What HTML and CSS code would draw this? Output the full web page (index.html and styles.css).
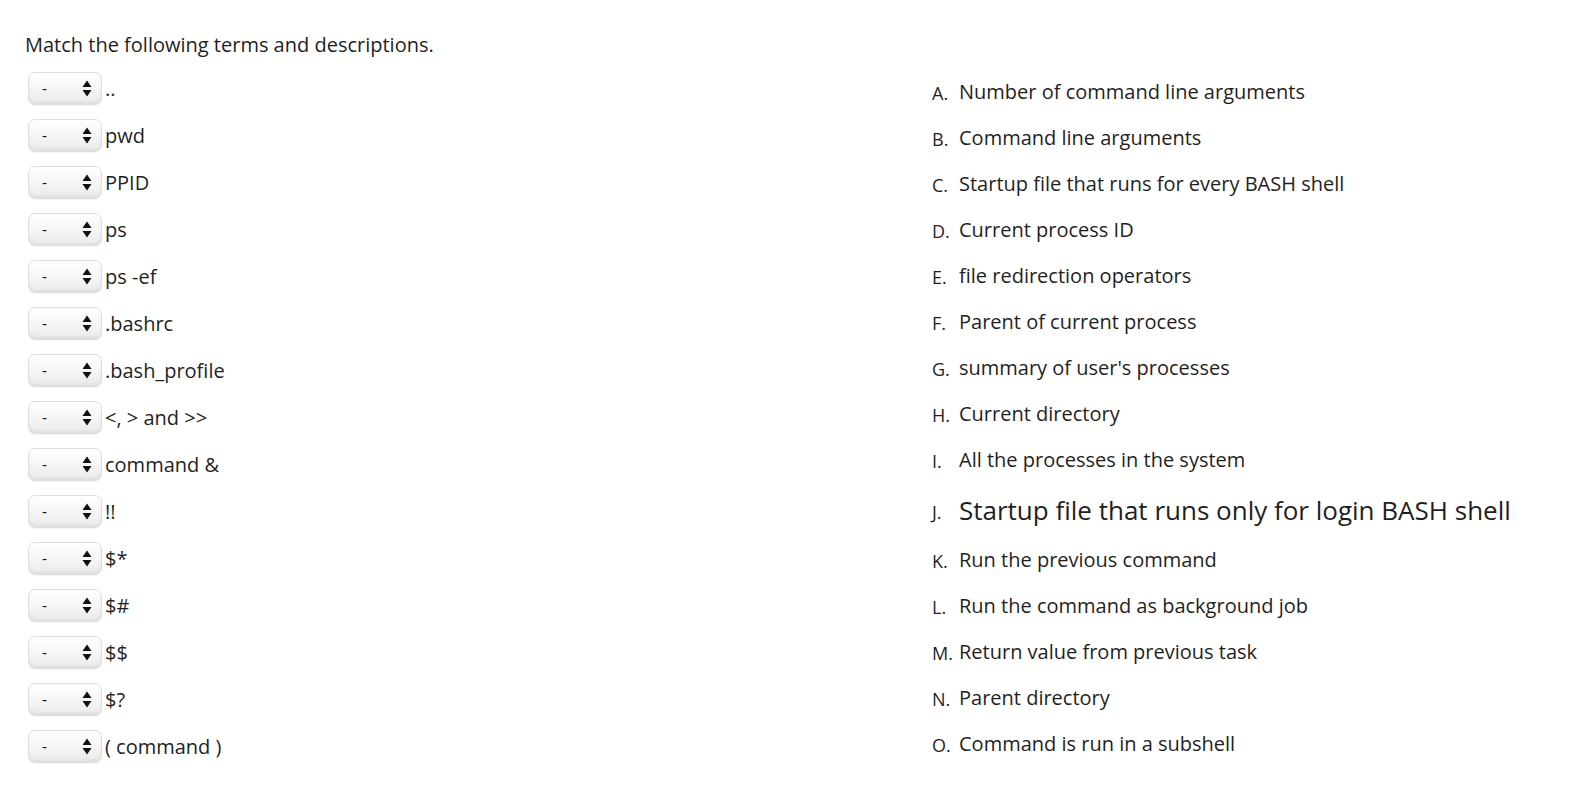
FILE: index.html
```html
<!DOCTYPE html>
<html>
<head>
<meta charset="utf-8">
<link rel="stylesheet" href="styles.css">
</head>
<body>
<div class="page">
  <p class="title">Match the following terms and descriptions.</p>
  <div class="columns">
    <div class="terms">
      <div class="term"><span class="sel"><span class="dash">-</span><svg class="arr" width="10" height="17" viewBox="0 0 10 17"><path d="M5 0.5 L9.5 7 H0.5 Z M5 16.5 L9.5 10 H0.5 Z" fill="#111"/></svg></span><span class="tt">..</span></div>
      <div class="term"><span class="sel"><span class="dash">-</span><svg class="arr" width="10" height="17" viewBox="0 0 10 17"><path d="M5 0.5 L9.5 7 H0.5 Z M5 16.5 L9.5 10 H0.5 Z" fill="#111"/></svg></span><span class="tt">pwd</span></div>
      <div class="term"><span class="sel"><span class="dash">-</span><svg class="arr" width="10" height="17" viewBox="0 0 10 17"><path d="M5 0.5 L9.5 7 H0.5 Z M5 16.5 L9.5 10 H0.5 Z" fill="#111"/></svg></span><span class="tt">PPID</span></div>
      <div class="term"><span class="sel"><span class="dash">-</span><svg class="arr" width="10" height="17" viewBox="0 0 10 17"><path d="M5 0.5 L9.5 7 H0.5 Z M5 16.5 L9.5 10 H0.5 Z" fill="#111"/></svg></span><span class="tt">ps</span></div>
      <div class="term"><span class="sel"><span class="dash">-</span><svg class="arr" width="10" height="17" viewBox="0 0 10 17"><path d="M5 0.5 L9.5 7 H0.5 Z M5 16.5 L9.5 10 H0.5 Z" fill="#111"/></svg></span><span class="tt">ps -ef</span></div>
      <div class="term"><span class="sel"><span class="dash">-</span><svg class="arr" width="10" height="17" viewBox="0 0 10 17"><path d="M5 0.5 L9.5 7 H0.5 Z M5 16.5 L9.5 10 H0.5 Z" fill="#111"/></svg></span><span class="tt">.bashrc</span></div>
      <div class="term"><span class="sel"><span class="dash">-</span><svg class="arr" width="10" height="17" viewBox="0 0 10 17"><path d="M5 0.5 L9.5 7 H0.5 Z M5 16.5 L9.5 10 H0.5 Z" fill="#111"/></svg></span><span class="tt">.bash_profile</span></div>
      <div class="term"><span class="sel"><span class="dash">-</span><svg class="arr" width="10" height="17" viewBox="0 0 10 17"><path d="M5 0.5 L9.5 7 H0.5 Z M5 16.5 L9.5 10 H0.5 Z" fill="#111"/></svg></span><span class="tt">&lt;, &gt; and &gt;&gt;</span></div>
      <div class="term"><span class="sel"><span class="dash">-</span><svg class="arr" width="10" height="17" viewBox="0 0 10 17"><path d="M5 0.5 L9.5 7 H0.5 Z M5 16.5 L9.5 10 H0.5 Z" fill="#111"/></svg></span><span class="tt">command &amp;</span></div>
      <div class="term"><span class="sel"><span class="dash">-</span><svg class="arr" width="10" height="17" viewBox="0 0 10 17"><path d="M5 0.5 L9.5 7 H0.5 Z M5 16.5 L9.5 10 H0.5 Z" fill="#111"/></svg></span><span class="tt">!!</span></div>
      <div class="term"><span class="sel"><span class="dash">-</span><svg class="arr" width="10" height="17" viewBox="0 0 10 17"><path d="M5 0.5 L9.5 7 H0.5 Z M5 16.5 L9.5 10 H0.5 Z" fill="#111"/></svg></span><span class="tt">$*</span></div>
      <div class="term"><span class="sel"><span class="dash">-</span><svg class="arr" width="10" height="17" viewBox="0 0 10 17"><path d="M5 0.5 L9.5 7 H0.5 Z M5 16.5 L9.5 10 H0.5 Z" fill="#111"/></svg></span><span class="tt">$#</span></div>
      <div class="term"><span class="sel"><span class="dash">-</span><svg class="arr" width="10" height="17" viewBox="0 0 10 17"><path d="M5 0.5 L9.5 7 H0.5 Z M5 16.5 L9.5 10 H0.5 Z" fill="#111"/></svg></span><span class="tt">$$</span></div>
      <div class="term"><span class="sel"><span class="dash">-</span><svg class="arr" width="10" height="17" viewBox="0 0 10 17"><path d="M5 0.5 L9.5 7 H0.5 Z M5 16.5 L9.5 10 H0.5 Z" fill="#111"/></svg></span><span class="tt">$?</span></div>
      <div class="term"><span class="sel"><span class="dash">-</span><svg class="arr" width="10" height="17" viewBox="0 0 10 17"><path d="M5 0.5 L9.5 7 H0.5 Z M5 16.5 L9.5 10 H0.5 Z" fill="#111"/></svg></span><span class="tt">( command )</span></div>
    </div>
    <div class="descs">
      <div class="desc"><span class="lbl">A.</span><span class="dt">Number of command line arguments</span></div>
      <div class="desc"><span class="lbl">B.</span><span class="dt">Command line arguments</span></div>
      <div class="desc"><span class="lbl">C.</span><span class="dt">Startup file that runs for every BASH shell</span></div>
      <div class="desc"><span class="lbl">D.</span><span class="dt">Current process ID</span></div>
      <div class="desc"><span class="lbl">E.</span><span class="dt">file redirection operators</span></div>
      <div class="desc"><span class="lbl">F.</span><span class="dt">Parent of current process</span></div>
      <div class="desc"><span class="lbl">G.</span><span class="dt">summary of user's processes</span></div>
      <div class="desc"><span class="lbl">H.</span><span class="dt">Current directory</span></div>
      <div class="desc"><span class="lbl">I.</span><span class="dt">All the processes in the system</span></div>
      <div class="desc big"><span class="lbl">J.</span><span class="dt">Startup file that runs only for login BASH shell</span></div>
      <div class="desc"><span class="lbl">K.</span><span class="dt">Run the previous command</span></div>
      <div class="desc"><span class="lbl">L.</span><span class="dt">Run the command as background job</span></div>
      <div class="desc"><span class="lbl">M.</span><span class="dt">Return value from previous task</span></div>
      <div class="desc"><span class="lbl">N.</span><span class="dt">Parent directory</span></div>
      <div class="desc"><span class="lbl">O.</span><span class="dt">Command is run in a subshell</span></div>
    </div>
  </div>
</div>
</body>
</html>
```

FILE: styles.css
```css
html, body {
  margin: 0;
  padding: 0;
  background: #fff;
}
body {
  font-family: "Open Sans", "Noto Sans", sans-serif;
  color: #1f1f1f;
}
.page {
  padding: 32px 0 0 25px;
}
.title {
  margin: 0;
  font-size: 20px;
  line-height: 26px;
}
.columns {
  display: flex;
  margin-top: 6px;
}
.terms {
  width: 905px;
  display: flex;
  flex-direction: column;
  padding-top: 1px;
}
.term {
  height: 47px;
  display: flex;
  align-items: center;
  font-size: 20px;
}
.sel {
  box-sizing: border-box;
  width: 74px;
  height: 33px;
  margin-left: 3px;
  margin-right: 3px;
  border: 1px solid #dedede;
  border-radius: 7px;
  background: linear-gradient(#ffffff 0%, #f6f6f6 50%, #e9e9e9 100%);
  box-shadow: inset 0 -2px 3px rgba(0,0,0,0.05), inset 0 1px 0 #fff, 0 1px 0 rgba(0,0,0,0.03);
  display: flex;
  align-items: center;
  padding-left: 13px;
  padding-right: 9px;
  justify-content: space-between;
}
.dash {
  font-family: "Liberation Sans", Arial, sans-serif;
  font-size: 15px;
  color: #111;
  line-height: 1;
}
.arr {
  display: block;
}
.tt {
  line-height: 1;
}
.descs {
  display: flex;
  flex-direction: column;
  padding-top: 4px;
  padding-left: 2px;
}
.desc {
  height: 46px;
  display: flex;
  align-items: center;
}
.lbl {
  width: 27px;
  font-size: 18px;
  flex-shrink: 0;
  position: relative;
  top: 2px;
}
.dt {
  font-size: 20px;
}
.desc.big {
  height: 54px;
  padding-top: 1px;
  box-sizing: border-box;
}
.desc.big .dt {
  font-size: 26px;
}
```
